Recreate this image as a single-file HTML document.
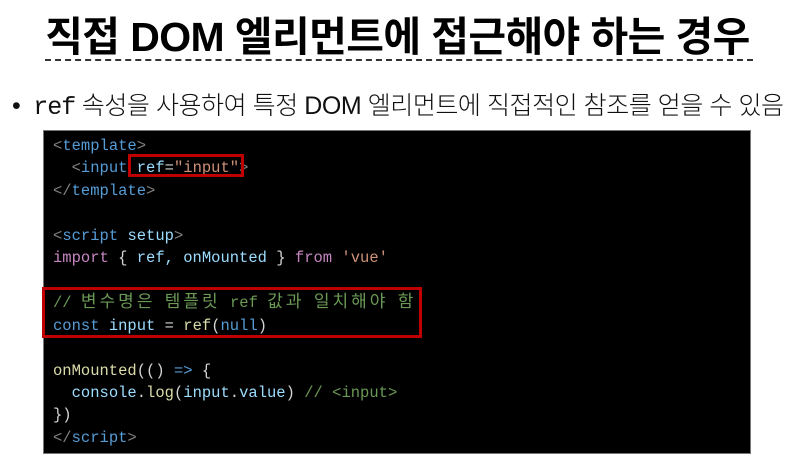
<!DOCTYPE html>
<html><head><meta charset="utf-8"><style>
body{margin:0;width:795px;height:467px;background:#fff;position:relative;overflow:hidden;font-family:"Liberation Sans","Noto Sans CJK KR",sans-serif}
.title{position:absolute;left:0;width:795px;top:3px;text-align:center;font-size:41px;font-weight:bold;color:#000;letter-spacing:-0.6px;white-space:nowrap}
.dash{position:absolute;left:45px;top:59px;width:708px;border-top:2px dashed #333}
.bul{position:absolute;left:12px;top:86px;font-size:25px;font-weight:300;color:#111;white-space:nowrap;letter-spacing:-0.45px}
.bul b{font-family:"Liberation Mono",monospace;font-weight:normal;letter-spacing:-1px}
.code{position:absolute;left:43px;top:130px;width:708px;height:324px;background:#000;border:1px solid #777;box-sizing:border-box}
pre{position:absolute;left:9px;top:4px;margin:0;font-family:"Liberation Mono","Noto Sans CJK KR",monospace;font-size:15.5px;line-height:22.45px;color:#9cdcfe}
.p{color:#808080}.t{color:#569cd6}.a{color:#9cdcfe}.s{color:#ce9178}.k{color:#c586c0}.c{color:#6a9955}.f{color:#dcdcaa}.w{color:#d4d4d4}
.ko{font-size:17px;letter-spacing:3px;line-height:1}
.r{position:absolute;border:3px solid #c00000;box-sizing:border-box}
</style></head><body>
<div class="title">직접 DOM 엘리먼트에 접근해야 하는 경우</div>
<div class="dash"></div>
<div class="bul">•&nbsp; <b>ref</b> 속성을 사용하여 특정 DOM 엘리먼트에 직접적인 참조를 얻을 수 있음</div>
<div class="code"><pre><span class="p">&lt;</span><span class="t">template</span><span class="p">&gt;</span>
  <span class="p">&lt;</span><span class="t">input</span> <span class="a">ref</span><span class="w">=</span><span class="s">"input"</span><span class="p">&gt;</span>
<span class="p">&lt;/</span><span class="t">template</span><span class="p">&gt;</span>

<span class="p">&lt;</span><span class="t">script</span> <span class="a">setup</span><span class="p">&gt;</span>
<span class="k">import</span> <span class="w">{</span> ref, onMounted <span class="w">}</span> <span class="k">from</span> <span class="s">'vue'</span>

<span class="c">// <span class="ko">변수명은</span> <span class="ko">템플릿</span> ref <span class="ko">값과</span> <span class="ko">일치해야</span> <span class="ko">함</span></span>
<span class="t">const</span> <span class="a">input</span> <span class="w">=</span> <span class="f">ref</span><span class="w">(</span><span class="t">null</span><span class="w">)</span>

<span class="f">onMounted</span><span class="w">(() </span><span class="t">=&gt;</span><span class="w"> {</span>
  <span class="a">console</span><span class="w">.</span><span class="f">log</span><span class="w">(</span>input<span class="w">.</span>value<span class="w">)</span> <span class="c">// &lt;input&gt;</span>
<span class="w">})</span>
<span class="p">&lt;/</span><span class="t">script</span><span class="p">&gt;</span></pre></div>
<div class="r" style="left:128px;top:154px;width:116px;height:23px"></div>
<div class="r" style="left:42px;top:287px;width:380px;height:51px"></div>
</body></html>
